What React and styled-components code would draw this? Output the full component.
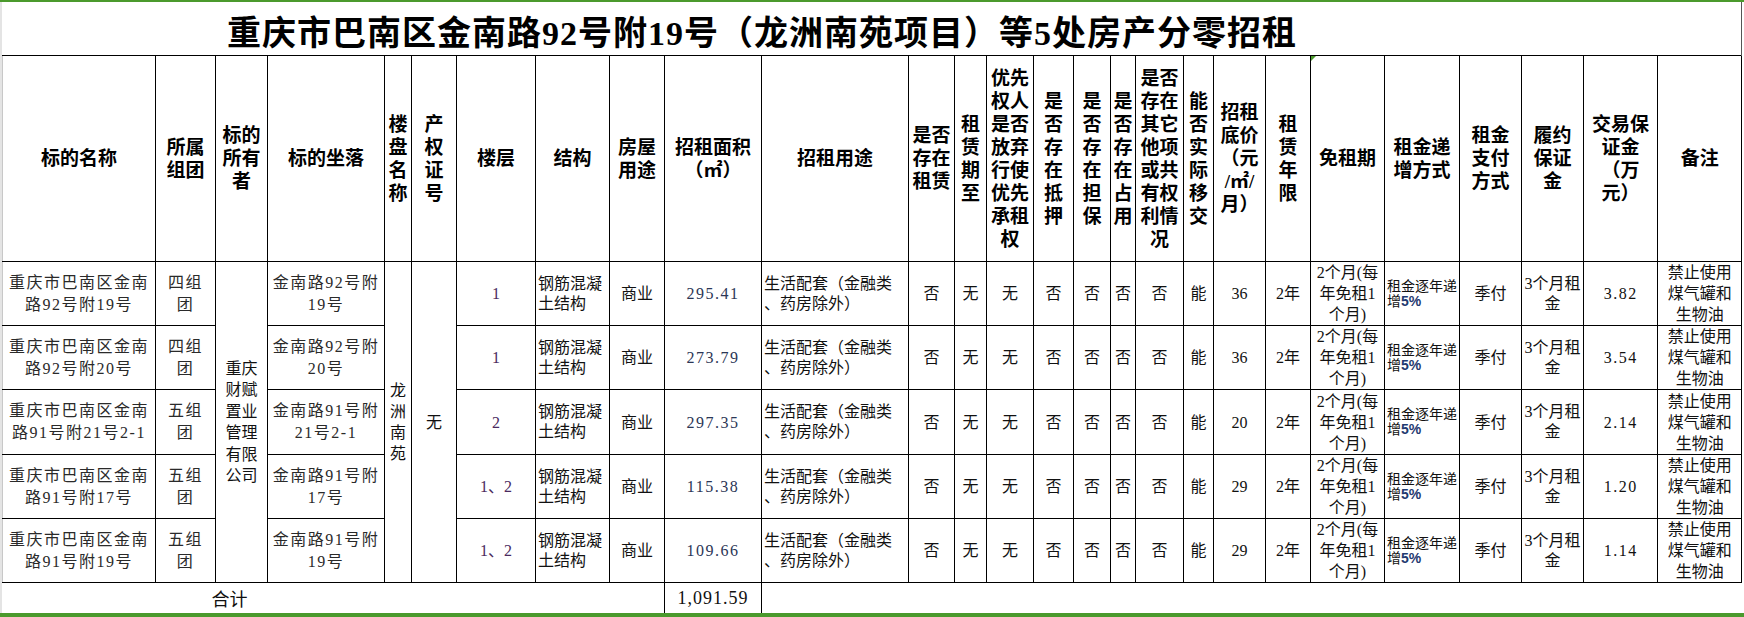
import React from 'react'
import styled, {createGlobalStyle, css} from 'styled-components'

const GREEN = '#4b9a2d'
const SERIF = '"Liberation Serif", "Noto Sans CJK SC", serif'

const GlobalStyle = createGlobalStyle`
	html, body {
		margin: 0;
		padding: 0;
		background: #fff;
	}
	body {
		font-family: ${SERIF};
	}
`

const Sheet = styled.div`
	width: 1744px;
	height: 617px;
	display: flex;
	flex-direction: column;
	overflow: hidden;
	background: #fff;
`
const Bar = styled.div`
	flex: none;
	height: ${props => props.$h}px;
	background: ${GREEN};
`
const Grid = styled.div`
	flex: 1;
	display: flex;
	border-left: 2px solid #e4e4e4;
	overflow: hidden;
`
const Table = styled.table`
	border-collapse: collapse;
	table-layout: fixed;
	width: 1739px;
	color: #111;
	font-family: ${SERIF};
`
const Row = styled.tr`
	height: ${props => props.$h}px;
`
const TitleCell = styled.td`
	padding: 4px 0 0;
	text-align: center;
	vertical-align: middle;
	font-size: 34px;
	font-weight: 700;
	letter-spacing: 1px;
	white-space: nowrap;
	color: #000;
`
const EdgeCell = styled.td`
	padding: 0;
	border-right: 1px solid #555;
`
const Th = styled.th`
	border: 1px solid #000;
	padding: 0;
	font-size: 19px;
	line-height: 23px;
	font-weight: 700;
	text-align: center;
	vertical-align: middle;
	white-space: nowrap;
	color: #000;
	position: relative;
	${props => props.$first && css`border-left-color: #c8c8c8;`}
	${props => props.$flag && css`
		&::before {
			content: '';
			position: absolute;
			top: 0;
			left: 0;
			border-top: 5px solid ${GREEN};
			border-right: 5px solid transparent;
		}
	`}
`
const Td = styled.td`
	border: 1px solid #000;
	padding: 0 ${props => props.$left ? '2px' : '0'};
	text-align: ${props => props.$left ? 'left' : 'center'};
	vertical-align: middle;
	white-space: nowrap;
	overflow: hidden;
	font-size: ${props => props.$size || 16}px;
	line-height: ${props => props.$lh || 21}px;
	letter-spacing: ${props => props.$spaced ? '1.5px' : '0'};
	color: ${props => props.$color || '#111'};
	${props => props.$first && css`border-left-color: #c8c8c8;`}
`
const Pct = styled.span`
	font-family: "Liberation Sans", sans-serif;
	font-weight: 700;
	color: #1f3a70;
`
const TotalLabel = styled.td`
	padding: 0;
	text-align: center;
	vertical-align: middle;
	font-size: 18px;
	color: #111;
`
const TotalValue = styled.td`
	border-left: 1px solid #000;
	border-right: 1px solid #000;
	padding: 0;
	text-align: center;
	vertical-align: middle;
	font-size: 18px;
	letter-spacing: 1px;
	color: #111;
`
const Blank = styled.td`
	padding: 0;
`

const widths = [153, 60, 52, 117, 27, 45, 79, 74, 55, 97, 147, 46, 32, 47, 40, 37, 25, 48, 30, 52, 45, 74, 75, 62, 62, 74, 84]

const headers = [
	['标的名称'],
	['所属', '组团'],
	['标的', '所有', '者'],
	['标的坐落'],
	['楼', '盘', '名', '称'],
	['产', '权', '证', '号'],
	['楼层'],
	['结构'],
	['房屋', '用途'],
	['招租面积', '（㎡）'],
	['招租用途'],
	['是否', '存在', '租赁'],
	['租', '赁', '期', '至'],
	['优先', '权人', '是否', '放弃', '行使', '优先', '承租', '权'],
	['是', '否', '存', '在', '抵', '押'],
	['是', '否', '存', '在', '担', '保'],
	['是', '否', '存', '在', '占', '用'],
	['是否', '存在', '其它', '他项', '或共', '有权', '利情', '况'],
	['能', '否', '实', '际', '移', '交'],
	['招租', '底价', '（元', '/㎡/', '月）'],
	['租', '赁', '年', '限'],
	['免租期'],
	['租金递', '增方式'],
	['租金', '支付', '方式'],
	['履约', '保证', '金'],
	['交易保', '证金', '（万', '元）'],
	['备注'],
]

const rows = [
	{name: ['重庆市巴南区金南', '路92号附19号'], group: '四组', addr: ['金南路92号附', '19号'], floor: '1', area: '295.41', price: '36', deposit: '3.82', h: 64},
	{name: ['重庆市巴南区金南', '路92号附20号'], group: '四组', addr: ['金南路92号附', '20号'], floor: '1', area: '273.79', price: '36', deposit: '3.54', h: 64},
	{name: ['重庆市巴南区金南', '路91号附21号2-1'], group: '五组', addr: ['金南路91号附', '21号2-1'], floor: '2', area: '297.35', price: '20', deposit: '2.14', h: 65},
	{name: ['重庆市巴南区金南', '路91号附17号'], group: '五组', addr: ['金南路91号附', '17号'], floor: '1、2', area: '115.38', price: '29', deposit: '1.20', h: 64},
	{name: ['重庆市巴南区金南', '路91号附19号'], group: '五组', addr: ['金南路91号附', '19号'], floor: '1、2', area: '109.66', price: '29', deposit: '1.14', h: 64},
]

const Lines = ({lines}) => lines.map((line, i) => (
	<React.Fragment key={i}>
		{i > 0 && <br/>}
		{line}
	</React.Fragment>
))

const DataRow = ({row, first}) => (
	<Row $h={row.h}>
		<Td $first $spaced $lh={22} $color="#2a2a2a"><Lines lines={row.name}/></Td>
		<Td $spaced $lh={22} $color="#2a2a2a"><Lines lines={[row.group, '团']}/></Td>
		{first && <Td rowSpan={5} $lh={21.5}><Lines lines={['重庆', '财赋', '置业', '管理', '有限', '公司']}/></Td>}
		<Td $spaced $lh={22} $color="#2a2a2a"><Lines lines={row.addr}/></Td>
		{first && <Td rowSpan={5}><Lines lines={['龙', '洲', '南', '苑']}/></Td>}
		{first && <Td rowSpan={5}>无</Td>}
		<Td $color="#4a2a5e">{row.floor}</Td>
		<Td $left $lh={20}><Lines lines={['钢筋混凝', '土结构']}/></Td>
		<Td>商业</Td>
		<Td $spaced $color="#2b3656">{row.area}</Td>
		<Td $left $lh={20}><Lines lines={['生活配套（金融类', '、药房除外）']}/></Td>
		<Td>否</Td>
		<Td>无</Td>
		<Td>无</Td>
		<Td>否</Td>
		<Td>否</Td>
		<Td>否</Td>
		<Td>否</Td>
		<Td>能</Td>
		<Td>{row.price}</Td>
		<Td>2年</Td>
		<Td><Lines lines={['2个月(每', '年免租1', '个月)']}/></Td>
		<Td $left $size={14} $lh={15}>租金逐年递<br/>增<Pct>5%</Pct></Td>
		<Td>季付</Td>
		<Td $lh={20}><Lines lines={['3个月租', '金']}/></Td>
		<Td $spaced>{row.deposit}</Td>
		<Td><Lines lines={['禁止使用', '煤气罐和', '生物油']}/></Td>
	</Row>
)

export default function App(){
	return(
		<Sheet>
			<GlobalStyle/>
			<Bar $h={2}/>
			<Grid>
				<Table>
					<colgroup>
						{widths.map((w, i) => <col key={i} style={{width: w}}/>)}
					</colgroup>
					<tbody>
						<Row $h={53}>
							<TitleCell colSpan={24}>重庆市巴南区金南路92号附19号（龙洲南苑项目）等5处房产分零招租</TitleCell>
							<EdgeCell colSpan={3}/>
						</Row>
						<Row $h={206}>
							{headers.map((h, i) => (
								<Th key={i} $first={i === 0} $flag={i === 21}><Lines lines={h}/></Th>
							))}
						</Row>
						{rows.map((row, i) => <DataRow key={i} row={row} first={i === 0}/>)}
						<Row $h={31}>
							<TotalLabel colSpan={6}>合计</TotalLabel>
							<Blank colSpan={3}/>
							<TotalValue>1,091.59</TotalValue>
							<Blank colSpan={17}/>
						</Row>
					</tbody>
				</Table>
			</Grid>
			<Bar $h={4}/>
		</Sheet>
	)
}
